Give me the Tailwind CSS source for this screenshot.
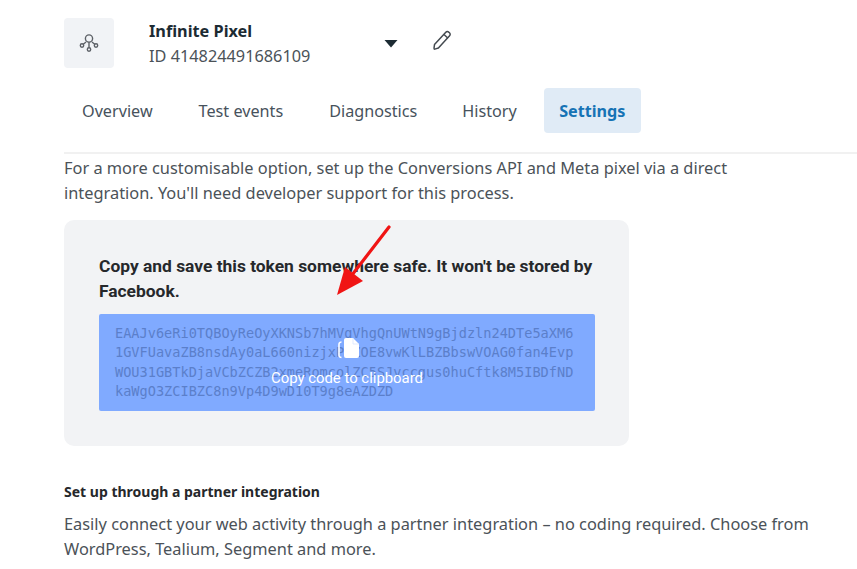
<!DOCTYPE html>
<html><head><meta charset="utf-8"><script src="https://cdn.jsdelivr.net/npm/@tailwindcss/browser@4"></script></head>
<body class="bg-white overflow-hidden">
<div class="relative w-[857px] h-[569px] overflow-hidden font-['Noto_Sans',sans-serif] text-[#3c4043]">
  <header class="flex items-start pl-[64px] pt-[18px] h-[88px]">
    <div class="w-[50px] h-[50px] rounded-[4px] bg-[#f1f3f6] flex items-center justify-center">
      <svg width="22" height="22" viewBox="0 0 22 22" fill="none" stroke="#5d6167" stroke-width="1.4"><circle cx="11" cy="6.5" r="3.6"/><path d="M11 10v6M8 10l-3 2.5M14 10l3 2.5"/><circle cx="4" cy="13.5" r="1.7"/><circle cx="18" cy="13.5" r="1.7"/><circle cx="11" cy="17.5" r="1.7"/></svg>
    </div>
    <div class="ml-[35px] w-[235px]">
      <div class="text-[16.3px] leading-[24px] font-bold text-[#1c2b33] mt-[1px]">Infinite Pixel</div>
      <div class="text-[16.3px] leading-[24px] text-[#4b5258] mt-[1px]">ID 414824491686109</div>
    </div>
    <svg class="mt-[21px]" width="14" height="9" viewBox="0 0 14 9"><path d="M0.5 1h13L7 8.5z" fill="#1c2b33"/></svg>
    <svg class="ml-[33px] mt-[11px]" width="22" height="22" viewBox="0 0 22 22" fill="none" stroke="#444a50" stroke-width="1.5" stroke-linejoin="round"><path d="M3.5 15.5 14.8 3.2a2 2 0 0 1 2.9-.1l.8.7a2 2 0 0 1 .1 2.9L7.4 19l-3.6 1.1a.6.6 0 0 1-.8-.7z"/><path d="M13 5.5l4 3.7"/></svg>
  </header>
  <nav class="flex items-center h-[45px] pl-[82px] text-[16.2px] text-[#47525c]">
    <a class="mr-[46px] pt-[2px]">Overview</a>
    <a class="mr-[46px] pt-[2px]">Test events</a>
    <a class="mr-[45px] pt-[2px]">Diagnostics</a>
    <a class="mr-[27px] pt-[2px]">History</a>
    <a class="w-[97px] h-[45px] pt-[2px] flex items-center justify-center rounded-[4px] bg-[#e0ebf6] font-bold text-[#1673b5]">Settings</a>
  </nav>
  <div class="h-[2px] bg-[#f1f1f1] mt-[19px] ml-[64px]"></div>
  <main class="pl-[64px]">
    <p class="w-[700px] text-[16.37px] leading-[25px] text-[#4b5258] mt-[2px]">For a more customisable option, set up the Conversions API and Meta pixel via a direct integration. You'll need developer support for this process.</p>
    <section class="w-[565px] h-[226px] mt-[14px] rounded-[10px] bg-[#f2f3f5] pl-[35px] pt-[34px]">
      <h2 class="w-[510px] text-[17.4px] leading-[25px] font-bold text-[#26282b] font-['Roboto',sans-serif]">Copy and save this token somewhere safe. It won't be stored by Facebook.</h2>
      <div class="relative mt-[10px] w-[496px] h-[97px] rounded-[2px] bg-[#80aaff] pl-[16px] pt-[10px] font-['DejaVu_Sans_Mono',monospace] text-[13.6px] leading-[19.3px] text-[#5b7fca]">
        <div>EAAJv6eRi0TQBOyReOyXKNSb7hMVgVhgQnUWtN9gBjdzln24DTe5aXM6</div>
        <div>1GVFUavaZB8nsdAy0aL660nizjxP5ZOE8vwKlLBZBbswVOAG0fan4Evp</div>
        <div>WOU31GBTkDjaVCbZCZB2xmeRomcolZC5SJvccgus0huCftk8M5IBDfND</div>
        <div>kaWgO3ZCIBZC8n9Vp4D9wD10T9g8eAZDZD</div>
        <div class="absolute left-[0px] top-[23px] w-full flex flex-col items-center">
          <svg class="ml-[4px]" width="26" height="24" viewBox="0 0 26 24"><path d="M5.5 5C2.5 5 3 7 3 10v6c0 3-.5 4 2.5 4.5" fill="none" stroke="#fff" stroke-width="1.6"/><path d="M10 1h7l6 6v12a2 2 0 0 1-2 2H10a2 2 0 0 1-2-2V3a2 2 0 0 1 2-2z" fill="#fff"/><path d="M17 1v6h6" fill="none" stroke="#d9e5ff" stroke-width=".8"/></svg>
          <div class="font-['Roboto',sans-serif] text-[14.9px] leading-[20px] text-white mt-[7px]">Copy code to clipboard</div>
        </div>
      </div>
    </section>
    <h3 class="mt-[36px] text-[14px] leading-[20px] font-bold text-[#26282b]">Set up through a partner integration</h3>
    <p class="w-[770px] mt-[10px] text-[16.37px] leading-[25px] text-[#4b5258]">Easily connect your web activity through a partner integration – no coding required. Choose from WordPress, Tealium, Segment and more.</p>
  </main>
  <svg class="absolute left-[330px] top-[220px]" width="65" height="80" viewBox="0 0 65 80"><path d="M59 7 22 55" stroke="#f01414" stroke-width="3.2" stroke-linecap="round"/><path d="M7 75 15 47 33 61z" fill="#f01414"/></svg>
</div>
</body></html>
